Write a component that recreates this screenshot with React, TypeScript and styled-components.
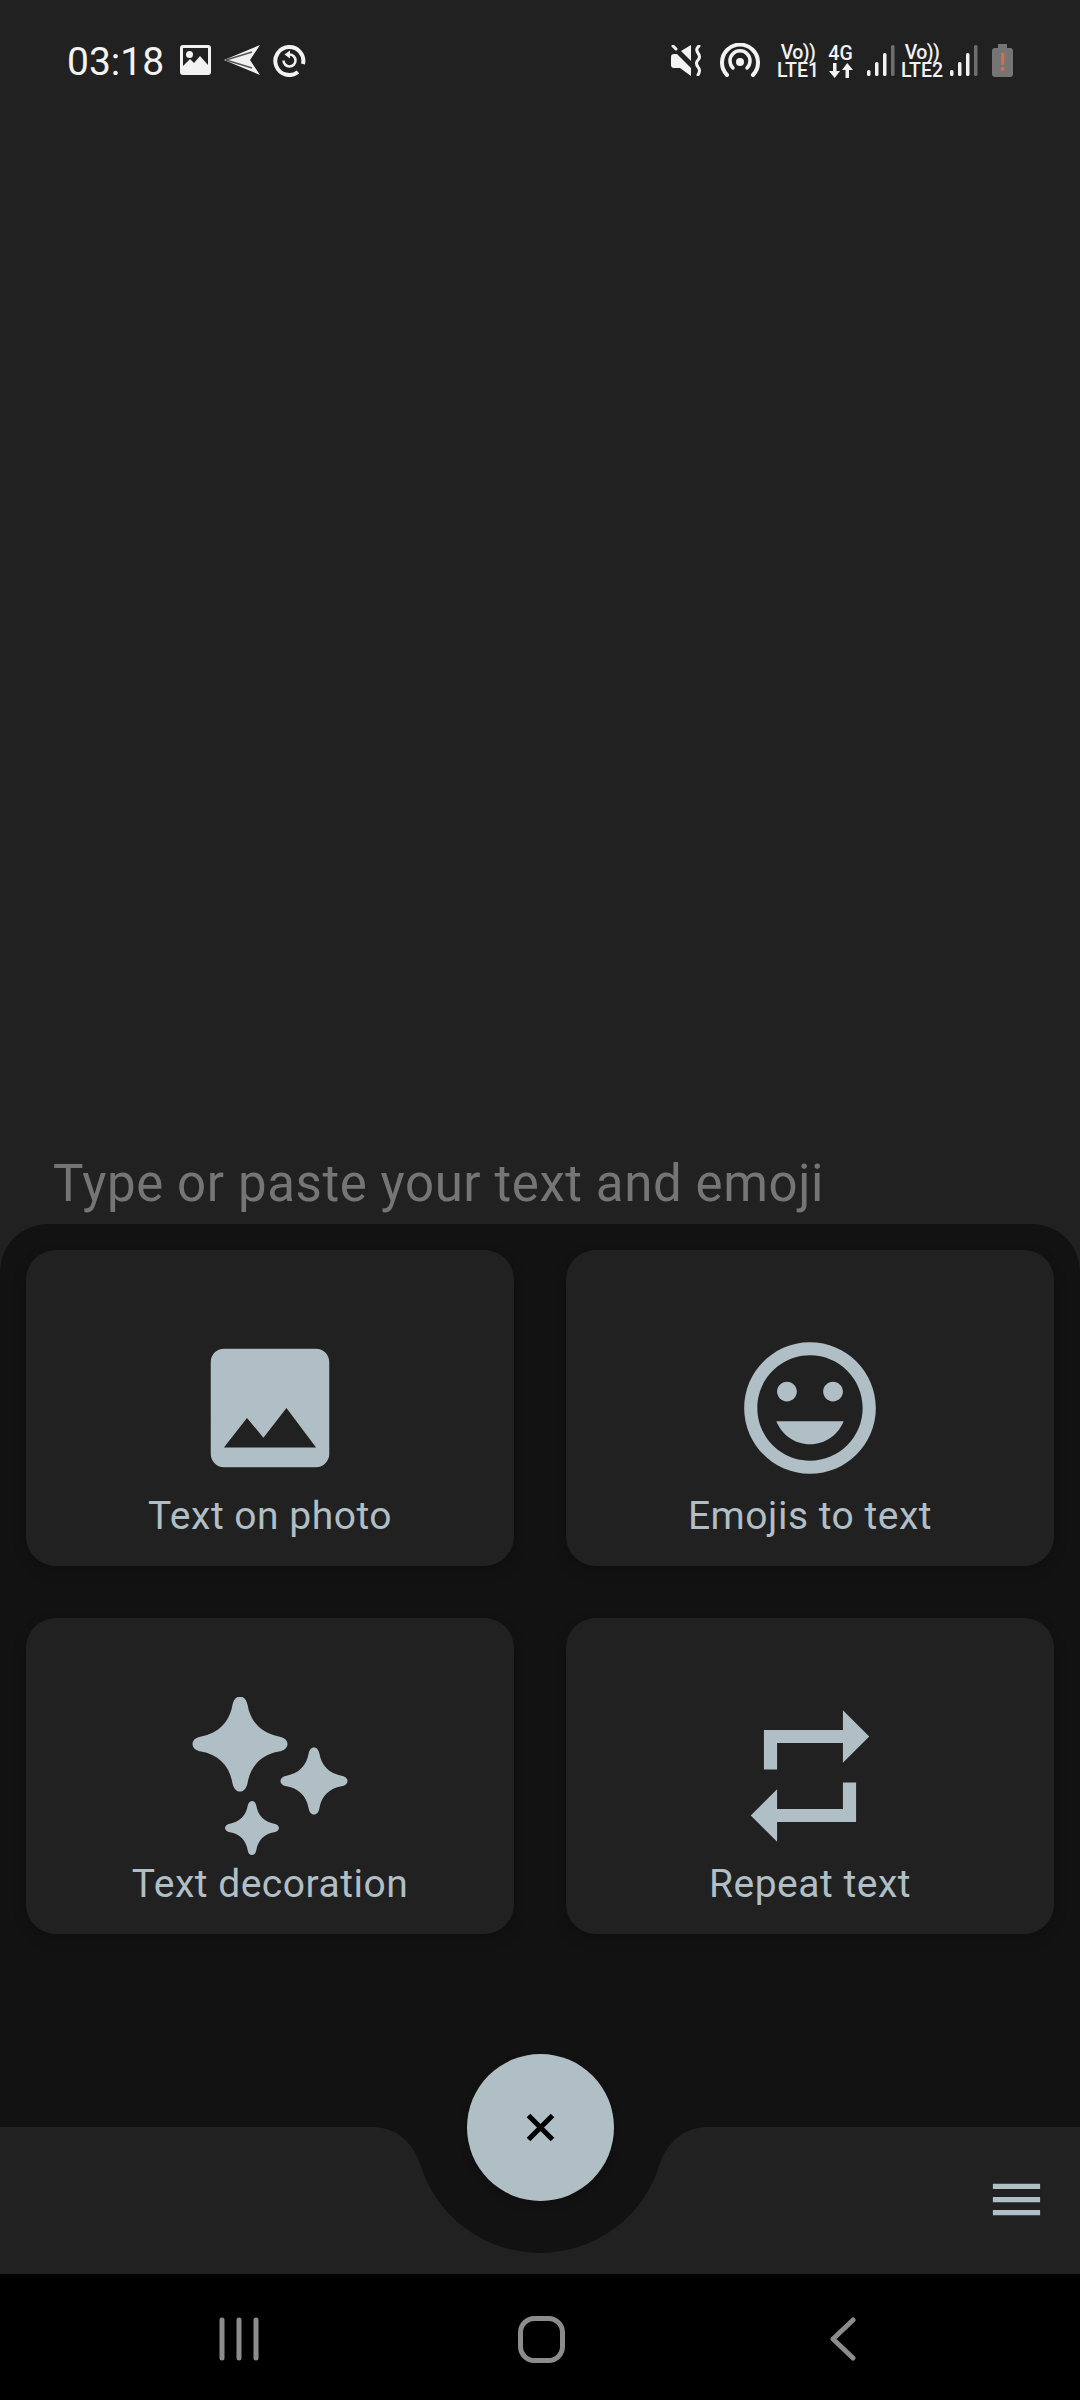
import React from "react";
import styled, { createGlobalStyle } from "styled-components";

const GlobalStyle = createGlobalStyle`
  html, body { margin: 0; padding: 0; background: #212121; }
  * { box-sizing: border-box; }
`;

const Page = styled.div`
  width: 1080px;
  height: 2400px;
  display: flex;
  flex-direction: column;
  background: #212121;
  font-family: Roboto, "Liberation Sans", sans-serif;
  overflow: hidden;
`;

const StatusBar = styled.div`
  height: 120px;
  flex: none;
  display: flex;
  align-items: center;
  justify-content: space-between;
  padding: 0 67px 0 67px;
  color: #f2f2f2;
`;

const StatusGroup = styled.div`
  display: flex;
  align-items: center;
`;

const Clock = styled.span`
  font-size: 39px;
  line-height: 46px;
  margin-top: 4px;
  margin-right: 16px;
`;

const StatusIcon = styled.svg<{ $gap?: number }>`
  display: block;
  flex: none;
  margin-left: ${(p) => p.$gap ?? 0}px;
`;

const NetStack = styled.div<{ $gap: number; $width: number }>`
  display: flex;
  flex-direction: column;
  align-items: center;
  width: ${(p) => p.$width}px;
  margin-top: 3px;
  margin-left: ${(p) => p.$gap}px;
  font-size: 19.5px;
  font-weight: 500;
  line-height: 18px;
  color: #f2f2f2;
  white-space: nowrap;
`;

const VoLabel = styled.span`
  letter-spacing: -0.6px;
`;

const Editor = styled.div`
  flex: 1;
  display: flex;
  align-items: flex-end;
  padding: 0 0 11px 53px;
`;

const Placeholder = styled.div`
  font-size: 51px;
  line-height: 58px;
  color: #757575;
  letter-spacing: 0.6px;
  white-space: nowrap;
`;

const Sheet = styled.div`
  flex: none;
  height: 1050px;
  display: flex;
  flex-direction: column;
  background: #121212;
  border-radius: 48px 48px 0 0;
`;

const ActionGrid = styled.div`
  display: grid;
  grid-template-columns: 488px 488px;
  grid-auto-rows: 316px;
  gap: 52px;
  padding: 26px 26px 0;
`;

const ActionCard = styled.div`
  display: flex;
  flex-direction: column;
  align-items: center;
  padding-top: 79px;
  background: #212121;
  border-radius: 30px;
  box-shadow: 0 6px 14px rgba(0, 0, 0, 0.18);
`;

const ActionIcon = styled.svg`
  display: block;
  width: 158px;
  height: 158px;
  fill: #b0bec5;
`;

const ActionLabel = styled.div`
  margin-top: 6px;
  font-size: 39px;
  line-height: 46px;
  color: #b0bec5;
  letter-spacing: 0.5px;
  white-space: nowrap;
`;

const BottomBar = styled.div`
  position: relative;
  margin-top: auto;
  height: 147px;
  display: flex;
  justify-content: flex-end;
  padding: 41px 32px 0 0;
`;

const BarShape = styled.svg`
  position: absolute;
  left: 0;
  top: 0;
  width: 1080px;
  height: 147px;
  fill: #212121;
`;

const MenuIcon = styled.svg`
  position: relative;
  display: block;
  width: 63px;
  height: 63px;
  fill: #b0bec5;
`;

const Fab = styled.div`
  position: absolute;
  left: 467px;
  top: -73px;
  width: 147px;
  height: 147px;
  display: flex;
  align-items: center;
  justify-content: center;
  border-radius: 50%;
  background: #b0bec5;
  box-shadow: 0 4px 10px rgba(0, 0, 0, 0.2);
`;

const NavBar = styled.div`
  flex: none;
  height: 126px;
  display: grid;
  grid-template-columns: repeat(3, 302px);
  padding: 4px 0 0 88px;
  align-items: center;
  justify-items: center;
  background: #000;
`;

const NavIcon = styled.svg`
  display: block;
  fill: none;
  stroke: #8c8c8c;
  stroke-linecap: round;
  stroke-linejoin: round;
`;

const STAR =
  "M0 -1C.09 -1 .14 -.92 .16 -.82C.22 -.46 .46 -.22 .82 -.16C.92 -.14 1 -.09 1 0C1 .09 .92 .14 .82 .16C.46 .22 .22 .46 .16 .82C.14 .92 .09 1 0 1C-.09 1 -.14 .92 -.16 .82C-.22 .46 -.46 .22 -.82 .16C-.92 .14 -1 .09 -1 0C-1 -.09 -.92 -.14 -.82 -.16C-.46 -.22 -.22 -.46 -.16 -.82C-.14 -.92 -.09 -1 0 -1Z";

const Signal = ({ gap }: { gap: number }) => (
  <StatusIcon $gap={gap} width="28" height="31" viewBox="0 0 28 31">
    <rect x="0" y="25" width="3.500" height="6" rx="1.500" fill="#f2f2f2" />
    <rect x="8" y="17" width="3.500" height="14" rx="1.500" fill="#f2f2f2" />
    <rect x="16" y="8" width="3.500" height="23" rx="1.500" fill="#f2f2f2" />
    <rect x="24" y="0" width="3.500" height="31" rx="1.500" fill="#6e6e6e" />
  </StatusIcon>
);

export default function App() {
  return (
    <Page>
      <GlobalStyle />
      <StatusBar>
        <StatusGroup>
          <Clock>03:18</Clock>
          <StatusIcon width="31" height="30" viewBox="0 0 31 30">
            <rect width="31" height="30" rx="3" fill="#f2f2f2" />
            <path d="M3 3H28V20L20 11L14 18L10 14L3 21Z" fill="#212121" />
            <circle cx="9.500" cy="9.500" r="3.500" fill="#f2f2f2" />
          </StatusIcon>
          <StatusIcon $gap={13} width="37" height="30" viewBox="0 0 37 30">
            <path d="M0 15L36 0L26 15L36 30Z" fill="#f2f2f2" />
            <path d="M2 15L28 7M2 15L28 23" stroke="#555" strokeWidth="1.500" fill="none" />
          </StatusIcon>
          <StatusIcon $gap={12} width="33" height="33" viewBox="0 0 33 33" fill="none" stroke="#f2f2f2">
            <path d="M25 28A14 14 0 1 1 30 20" strokeWidth="4" />
            <path d="M10.500 16.500A6 6 0 1 0 16.500 10.500" strokeWidth="2.500" />
            <path d="M11.500 10.500L17 6.500V14.500Z" fill="#f2f2f2" stroke="none" />
          </StatusIcon>
        </StatusGroup>
        <StatusGroup>
          <StatusIcon width="31" height="31" viewBox="0 0 31 31" fill="#f2f2f2">
            <path d="M3 9H6L20 23V31L9 23H3Q0 23 0 20V12Q0 9 3 9Z" />
            <path d="M10 6L20 0V16Z" />
            <path d="M2 1L5 4" stroke="#f2f2f2" strokeWidth="3" strokeLinecap="round" />
            <path d="M28 1Q24 4 27 8Q30 12 27 15Q24 18 27 22Q30 25 27 30" fill="none" stroke="#f2f2f2" strokeWidth="3" strokeLinecap="round" />
          </StatusIcon>
          <StatusIcon $gap={18} width="40" height="34" viewBox="0 0 40 34" fill="none" stroke="#f2f2f2" strokeLinecap="round">
            <path d="M7 32A18 18 0 1 1 33 32" strokeWidth="4" />
            <path d="M13 25A10 10 0 1 1 27 25" strokeWidth="3.500" />
            <circle cx="20" cy="19" r="4" fill="#f2f2f2" stroke="none" />
          </StatusIcon>
          <NetStack $gap={17} $width={42}>
            <VoLabel>Vo))</VoLabel>
            <span>LTE1</span>
          </NetStack>
          <NetStack $gap={8} $width={27}>
            <span>4G</span>
            <StatusIcon width="24" height="15" viewBox="0 0 24 15" fill="#f2f2f2">
              <path d="M4 0H7.500V8H11L5.700 15L0 8H4Z" />
              <path d="M16.500 15H20V7H24L18.300 0L13 7H16.500Z" />
            </StatusIcon>
          </NetStack>
          <Signal gap={13} />
          <NetStack $gap={6} $width={42}>
            <VoLabel>Vo))</VoLabel>
            <span>LTE2</span>
          </NetStack>
          <Signal gap={7} />
          <StatusIcon $gap={14} width="21" height="33" viewBox="0 0 21 33">
            <path d="M6 0H15V4H18Q21 4 21 7V30Q21 33 18 33H3Q0 33 0 30V7Q0 4 3 4H6Z" fill="#757575" />
            <path d="M9 9H12.500L12 21H9.500Z" fill="#dd6b45" />
            <circle cx="10.700" cy="25" r="2" fill="#dd6b45" />
          </StatusIcon>
        </StatusGroup>
      </StatusBar>

      <Editor>
        <Placeholder>Type or paste your text and emoji</Placeholder>
      </Editor>

      <Sheet>
        <ActionGrid>
          <ActionCard>
            <ActionIcon viewBox="0 0 24 24">
              <path d="M21 19V5c0-1.100-.9-2-2-2H5c-1.100 0-2 .9-2 2v14c0 1.100.9 2 2 2h14c1.100 0 2-.9 2-2zM8.500 13.500l2.500 3.010L14.500 12l4.500 6H5l3.500-4.500z" />
            </ActionIcon>
            <ActionLabel>Text on photo</ActionLabel>
          </ActionCard>
          <ActionCard>
            <ActionIcon viewBox="0 0 24 24">
              <path d="M11.990 2C6.470 2 2 6.480 2 12s4.470 10 9.990 10C17.520 22 22 17.520 22 12S17.520 2 11.990 2zM12 20c-4.420 0-8-3.580-8-8s3.580-8 8-8 8 3.580 8 8-3.580 8-8 8zm3.500-9c.83 0 1.500-.67 1.500-1.500S16.330 8 15.500 8 14 8.670 14 9.500s.67 1.500 1.500 1.500zm-7 0c.83 0 1.500-.67 1.500-1.500S9.330 8 8.500 8 7 8.670 7 9.500 7.670 11 8.500 11zm3.500 6.500c2.330 0 4.310-1.460 5.110-3.500H6.890c.8 2.040 2.780 3.500 5.110 3.500z" />
            </ActionIcon>
            <ActionLabel>Emojis to text</ActionLabel>
          </ActionCard>
          <ActionCard>
            <ActionIcon viewBox="0 0 158 158">
              <path d={STAR} transform="translate(49 47) scale(47.500)" />
              <path d={STAR} transform="translate(123 84) scale(33.500)" />
              <path d={STAR} transform="translate(61 131) scale(27)" />
            </ActionIcon>
            <ActionLabel>Text decoration</ActionLabel>
          </ActionCard>
          <ActionCard>
            <ActionIcon viewBox="0 0 24 24">
              <path d="M7 7h10v3l4-4-4-4v3H5v6h2V7zm10 10H7v-3l-4 4 4 4v-3h12v-6h-2v4z" />
            </ActionIcon>
            <ActionLabel>Repeat text</ActionLabel>
          </ActionCard>
        </ActionGrid>

        <BottomBar>
          <BarShape viewBox="0 0 1080 147">
            <path d="M0 0H372C395 0 412 14 420 36A125 125 0 0 0 660 36C668 14 685 0 708 0H1080V147H0Z" />
          </BarShape>
          <Fab>
            <svg width="29" height="29" viewBox="0 0 29 29" fill="none" stroke="#000" strokeWidth="5">
              <path d="M2.500 2.500L26.500 26.500M26.500 2.500L2.500 26.500" />
            </svg>
          </Fab>
          <MenuIcon viewBox="0 0 24 24">
            <path d="M3 18h18v-2H3v2zm0-5h18v-2H3v2zm0-7v2h18V6H3z" />
          </MenuIcon>
        </BottomBar>
      </Sheet>

      <NavBar>
        <NavIcon width="40" height="44" viewBox="0 0 40 44" strokeWidth="5">
          <path d="M3 3V41M20 3V41M37 3V41" />
        </NavIcon>
        <NavIcon width="47" height="47" viewBox="0 0 47 47" strokeWidth="5">
          <rect x="2.500" y="2.500" width="42" height="42" rx="14" />
        </NavIcon>
        <NavIcon width="26" height="44" viewBox="0 0 26 44" strokeWidth="5">
          <path d="M23 3L3 22L23 41" />
        </NavIcon>
      </NavBar>
    </Page>
  );
}
